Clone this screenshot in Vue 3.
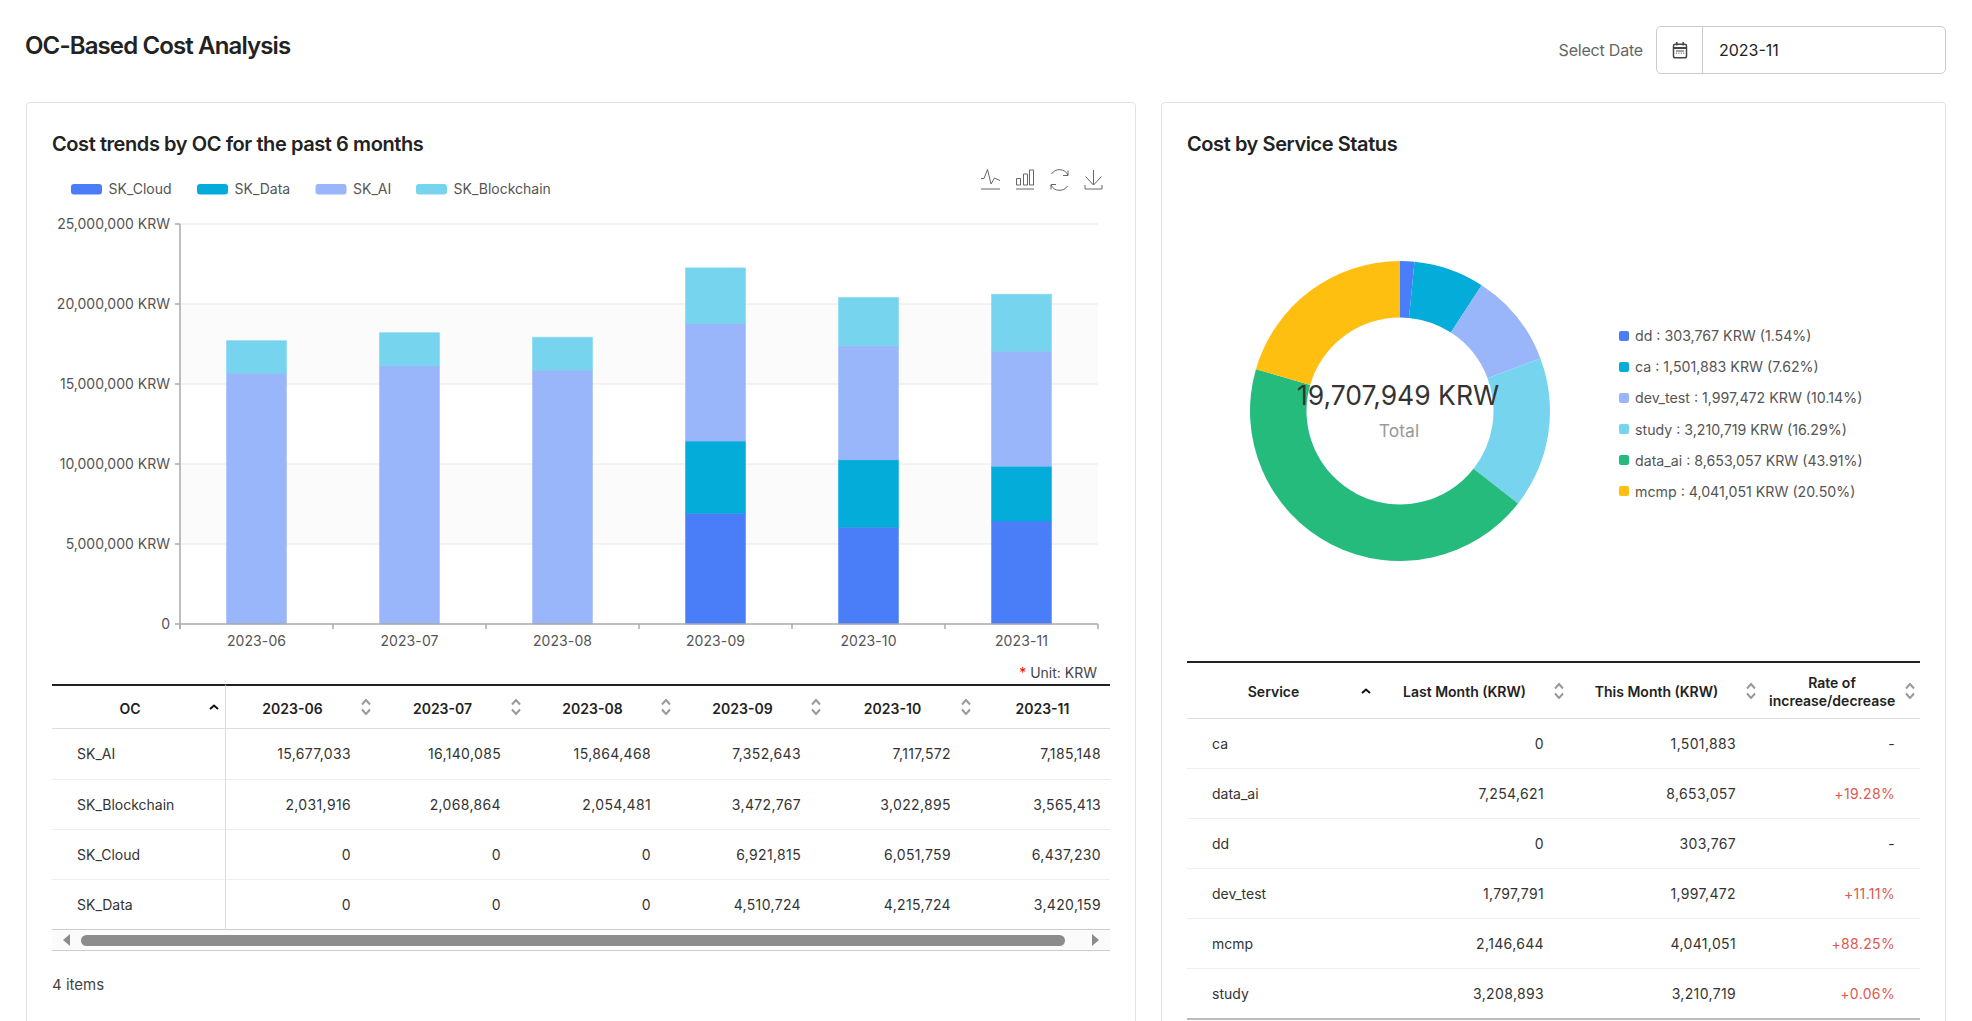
<script setup>
const series = [
  { name: 'SK_Cloud', color: '#4a7ef8', vals: [0, 0, 0, 6921815, 6051759, 6437230], lx: 71 },
  { name: 'SK_Data', color: '#03acd9', vals: [0, 0, 0, 4510724, 4215724, 3420159], lx: 197 },
  { name: 'SK_AI', color: '#9ab6fa', vals: [15677033, 16140085, 15864468, 7352643, 7117572, 7185148], lx: 315.5 },
  { name: 'SK_Blockchain', color: '#77d4ee', vals: [2031916, 2068864, 2054481, 3472767, 3022895, 3565413], lx: 416 }
]
const months = ['2023-06', '2023-07', '2023-08', '2023-09', '2023-10', '2023-11']
const AX = 180
const CW = 153
const Y0 = 624
const scale = 80 / 5000000
const fmt = (n) => n.toLocaleString('en-US')

const gridYs = [224, 304, 384, 464, 544]
const yLabels = [
  { t: '25,000,000 KRW', y: 224 },
  { t: '20,000,000 KRW', y: 304 },
  { t: '15,000,000 KRW', y: 384 },
  { t: '10,000,000 KRW', y: 464 },
  { t: '5,000,000 KRW', y: 544 },
  { t: '0', y: 624 }
]
const xTicks = Array.from({ length: 7 }, (_, i) => AX + CW * i)
const bars = []
months.forEach((m, i) => {
  let base = Y0
  series.forEach((s) => {
    const h = s.vals[i] * scale
    if (h > 0) {
      bars.push({ key: m + s.name, x: AX + CW * (i + 0.5) - 30, y: base - h, h, color: s.color })
      base -= h
    }
  })
})

const ocRows = ['SK_AI', 'SK_Blockchain', 'SK_Cloud', 'SK_Data'].map((name) => ({
  name,
  vals: series.find((s) => s.name === name).vals.map(fmt)
}))

const donut = [
  { name: 'dd', val: 303767, pct: 1.54, color: '#4a7ef8' },
  { name: 'ca', val: 1501883, pct: 7.62, color: '#03acd9' },
  { name: 'dev_test', val: 1997472, pct: 10.14, color: '#9ab6fa' },
  { name: 'study', val: 3210719, pct: 16.29, color: '#77d4ee' },
  { name: 'data_ai', val: 8653057, pct: 43.91, color: '#24bb7c' },
  { name: 'mcmp', val: 4041051, pct: 20.5, color: '#ffbf10' }
]
const C = 151
const R = 150
const r = 93.5
const pt = (rad, a) => {
  const t = (a - 90) * Math.PI / 180
  return `${(C + rad * Math.cos(t)).toFixed(2)} ${(C + rad * Math.sin(t)).toFixed(2)}`
}
let acc = 0
const arcs = donut.map((d) => {
  const a0 = acc * 3.6
  acc += d.pct
  const a1 = acc * 3.6
  const large = a1 - a0 > 180 ? 1 : 0
  return {
    name: d.name,
    color: d.color,
    d: `M${pt(R, a0)}A${R} ${R} 0 ${large} 1 ${pt(R, a1)}L${pt(r, a1)}A${r} ${r} 0 ${large} 0 ${pt(r, a0)}Z`
  }
})

const svcRows = [
  ['ca', '0', '1,501,883', '-'],
  ['data_ai', '7,254,621', '8,653,057', '+19.28%'],
  ['dd', '0', '303,767', '-'],
  ['dev_test', '1,797,791', '1,997,472', '+11.11%'],
  ['mcmp', '2,146,644', '4,041,051', '+88.25%'],
  ['study', '3,208,893', '3,210,719', '+0.06%']
]
</script>

<template>
  <div class="page">
    <header class="top">
      <h1 class="title">OC-Based Cost Analysis</h1>
      <div class="date">
        <span class="date-label">Select Date</span>
        <div class="date-box">
          <span class="date-icon">
            <svg width="16" height="18" viewBox="0 0 16 18" fill="none" stroke="#444" stroke-width="1.5">
              <rect x="1.5" y="3.2" width="13" height="13.6" rx="1.8" />
              <path d="M1.5 7h13" stroke-width="2" />
              <path d="M4.8 1v3.4M11.2 1v3.4" />
              <path d="M4 10h8M4 12.2h1M6.4 12.2h1M8.8 12.2h1M11.2 12.2h1" stroke-width="1" />
            </svg>
          </span>
          <span class="date-value">2023-11</span>
        </div>
      </div>
    </header>

    <div class="cards">
      <section class="card">
        <h2 class="card-title">Cost trends by OC for the past 6 months</h2>
        <svg class="chart" width="1058" height="500" viewBox="52 158 1058 500">
          <g v-for="s in series" :key="s.name">
            <rect :x="s.lx" y="184" width="31" height="10.5" rx="3" :fill="s.color" />
            <text :x="s.lx + 37.5" y="194" class="ct">{{ s.name }}</text>
          </g>

          <g fill="none" stroke="#666" stroke-width="1">
            <path d="M981 178.500h3l3.500-9 3.500 14.500 3.500-6 5.500 2.500M981 189h19" />
            <path d="M1016.500 178.500h4v6.500h-4zM1023.500 174h4v11h-4zM1029.500 170h4v15h-4zM1016 189h18" />
            <path d="M1051.500 174a9.500 9.500 0 0 1 16.500 1M1068 170.500v5h-5M1067.500 186a9.500 9.500 0 0 1-16.500-1M1051 189.500v-5h5" />
            <path d="M1093.500 170v15M1085.500 176.500l8 8.500 8-8.500M1085 185v4h17v-4" />
          </g>

          <rect x="180" y="304" width="918" height="80" fill="#fbfbfb" />
          <rect x="180" y="464" width="918" height="80" fill="#fbfbfb" />
          <line v-for="y in gridYs" :key="y" x1="180" :y1="y" x2="1098" :y2="y" stroke="#efefef" stroke-width="1.500" />

          <rect
            v-for="b in bars"
            :key="b.key"
            :x="b.x"
            :y="b.y"
            width="60"
            :height="b.h"
            :fill="b.color"
            :stroke="b.color"
            stroke-opacity="0.5"
            stroke-width="1"
          />

          <g stroke="#aaa" stroke-width="1.500">
            <line x1="180" y1="224" x2="180" y2="629" />
            <line x1="175" y1="624" x2="1098" y2="624" />
            <line v-for="y in gridYs" :key="'t' + y" x1="175" :y1="y" x2="180" :y2="y" />
            <line v-for="x in xTicks" :key="x" :x1="x" y1="624" :x2="x" y2="629" />
          </g>

          <text v-for="l in yLabels" :key="l.t" x="170" :y="l.y + 4.500" text-anchor="end" class="ct">{{ l.t }}</text>
          <text v-for="(m, i) in months" :key="m" :x="AX + CW * (i + 0.5)" y="645.500" text-anchor="middle" class="ct xl">{{ m }}</text>
        </svg>

        <div class="unit"><span class="star">*</span> Unit: KRW</div>

        <div class="table-wrap">
          <table class="tbl oc">
            <colgroup>
              <col style="width: 174px" />
              <col v-for="m in months" :key="m" style="width: 150px" />
            </colgroup>
            <thead>
              <tr>
                <th class="divider">
                  OC
                  <svg class="sort on" width="10" height="6" viewBox="0 0 10 6" fill="none"><path d="M1 5l4-3.500L9 5" stroke="#111" stroke-width="2" /></svg>
                </th>
                <th v-for="(m, i) in months" :key="m">
                  {{ m }}
                  <svg v-if="i < 5" class="sort" width="10" height="17" viewBox="0 0 10 17" fill="none" stroke="#999" stroke-width="2"><path d="M1 6l4-4.500L9 6M1 11l4 4.500L9 11" /></svg>
                </th>
              </tr>
            </thead>
            <tbody>
              <tr v-for="row in ocRows" :key="row.name">
                <td class="name divider">{{ row.name }}</td>
                <td v-for="(v, i) in row.vals" :key="i" class="num">{{ v }}</td>
              </tr>
            </tbody>
          </table>
        </div>
        <div class="scrollbar">
          <span class="arrow left"></span>
          <span class="thumb"></span>
          <span class="arrow right"></span>
        </div>
        <div class="items">4 items</div>
      </section>

      <section class="card">
        <h2 class="card-title">Cost by Service Status</h2>
        <div class="donut-area">
          <svg class="donut" width="302" height="302" viewBox="0 0 302 302">
            <path v-for="a in arcs" :key="a.name" :d="a.d" :fill="a.color" />
            <text x="149" y="145" text-anchor="middle" class="big">19,707,949 KRW</text>
            <text x="150" y="177" text-anchor="middle" class="total">Total</text>
          </svg>
          <ul class="legend">
            <li v-for="d in donut" :key="d.name">
              <span class="sw" :style="{ background: d.color }"></span>
              <span>{{ d.name }} : {{ fmt(d.val) }} KRW ({{ d.pct.toFixed(2) }}%)</span>
            </li>
          </ul>
        </div>
        <table class="tbl svc">
          <colgroup>
            <col style="width: 190px" />
            <col style="width: 192px" />
            <col style="width: 192px" />
            <col style="width: 159px" />
          </colgroup>
          <thead>
            <tr>
              <th>
                Service
                <svg class="sort on" width="10" height="6" viewBox="0 0 10 6" fill="none"><path d="M1 5l4-3.500L9 5" stroke="#111" stroke-width="2" /></svg>
              </th>
              <th v-for="h in ['Last Month (KRW)', 'This Month (KRW)', 'Rate of increase/decrease']" :key="h">
                {{ h }}
                <svg class="sort" width="10" height="17" viewBox="0 0 10 17" fill="none" stroke="#999" stroke-width="2"><path d="M1 6l4-4.500L9 6M1 11l4 4.500L9 11" /></svg>
              </th>
            </tr>
          </thead>
          <tbody>
            <tr v-for="row in svcRows" :key="row[0]">
              <td class="name">{{ row[0] }}</td>
              <td class="num">{{ row[1] }}</td>
              <td class="num">{{ row[2] }}</td>
              <td class="num" :class="{ up: row[3] !== '-' }">{{ row[3] }}</td>
            </tr>
          </tbody>
        </table>
      </section>
    </div>
  </div>
</template>

<style>
html, body { margin: 0; overflow: hidden; background: #fff; }
</style>

<style scoped>
.page {
  height: 1021px;
  overflow: hidden;
  box-sizing: border-box;
  padding: 26px 26px 0;
  font-family: Inter, "Noto Sans", sans-serif;
  font-size: 14px;
  color: #333;
}
.top { display: flex; justify-content: space-between; align-items: flex-start; height: 47px; margin-bottom: 29px; }
.title { margin: 0 0 0 -1px; font-size: 24px; line-height: 40px; font-weight: 600; color: #222; letter-spacing: -0.87px; }
.date { display: flex; align-items: center; gap: 13px; }
.date-label { color: #666; font-size: 16px; letter-spacing: -0.2px; }
.date-box { width: 290px; height: 48px; box-sizing: border-box; display: flex; align-items: center; border: 1px solid #ccc; border-radius: 5px; }
.date-icon { width: 46px; height: 100%; box-sizing: border-box; border-right: 1px solid #ccc; display: flex; align-items: center; justify-content: center; }
.date-value { margin-left: 16px; color: #222; font-size: 16px; }
.cards { display: grid; grid-template-columns: 1110px 785px; gap: 25px; align-items: start; }
.card { border: 1px solid #e2e2e2; border-radius: 4px; padding: 27px 25px 60px; background: #fff; }
.card-title { margin: 0; font-size: 20px; line-height: 28px; font-weight: 600; color: #222; letter-spacing: -0.42px; }
.chart { display: block; }
.ct { font-family: Inter, sans-serif; font-size: 14px; fill: #555; }
.xl { letter-spacing: 0.1px; }
.unit { height: 26px; line-height: 30px; text-align: right; padding-right: 13px; color: #444; }
.star { color: #f00; }
.table-wrap { overflow: hidden; }
.tbl { border-collapse: separate; border-spacing: 0; table-layout: fixed; }
.oc { width: 1074px; }
.svc { width: 733px; }
.tbl th {
  position: relative;
  box-sizing: border-box;
  padding: 3px 25px 0 8px;
  text-align: center;
  font-weight: 600;
  color: #222;
  line-height: 18px;
  border-top: 2px solid #222;
  border-bottom: 1px solid #ddd;
}
.oc th { height: 45px; }
.svc th { height: 58px; }
.tbl td { box-sizing: border-box; height: 50px; padding: 0 25px; border-bottom: 1px solid #eee; color: #333; }
.oc tbody tr:first-child td { height: 51px; padding-bottom: 2px; }
.oc tbody tr:last-child td { border-bottom-color: #ccc; }
.svc tbody tr:last-child td { height: 51px; border-bottom: 2px solid #bbb; }
.divider { border-right: 1px solid #ddd; }
.num { text-align: right; letter-spacing: 0.35px; }
.tbl td.up { color: #e0584f; }
.sort { position: absolute; right: 5px; top: 50%; transform: translateY(-50%); }
.sort.on { right: 6px; }
.scrollbar { height: 20px; box-sizing: content-box; border-bottom: 1px solid #ccc; background: #fbfbfb; display: flex; align-items: center; }
.arrow { width: 0; height: 0; border-top: 6.5px solid transparent; border-bottom: 6.5px solid transparent; }
.arrow.left { margin-left: 11px; border-right: 7.5px solid #8c8c8c; }
.arrow.right { margin-left: 27px; border-left: 7.5px solid #8c8c8c; }
.thumb { margin-left: 11px; width: 984px; height: 11px; border-radius: 5.5px; background: #8c8c8c; }
.items { margin-top: 24px; line-height: 20px; color: #444; font-size: 15px; }
.donut-area { height: 503px; display: flex; align-items: center; }
.donut { margin: 2px 0 0 62px; flex: none; overflow: visible; }
.big { font-family: Inter, sans-serif; font-size: 26.5px; fill: #333; }
.total { font-family: Inter, sans-serif; font-size: 17.5px; fill: #999; }
.legend { list-style: none; margin: 8px 0 0 68px; padding: 0; color: #555; font-size: 14.2px; }
.legend li { display: flex; align-items: center; gap: 6px; height: 31.2px; white-space: nowrap; }
.sw { width: 10px; height: 10px; border-radius: 2px; flex: none; }
</style>
